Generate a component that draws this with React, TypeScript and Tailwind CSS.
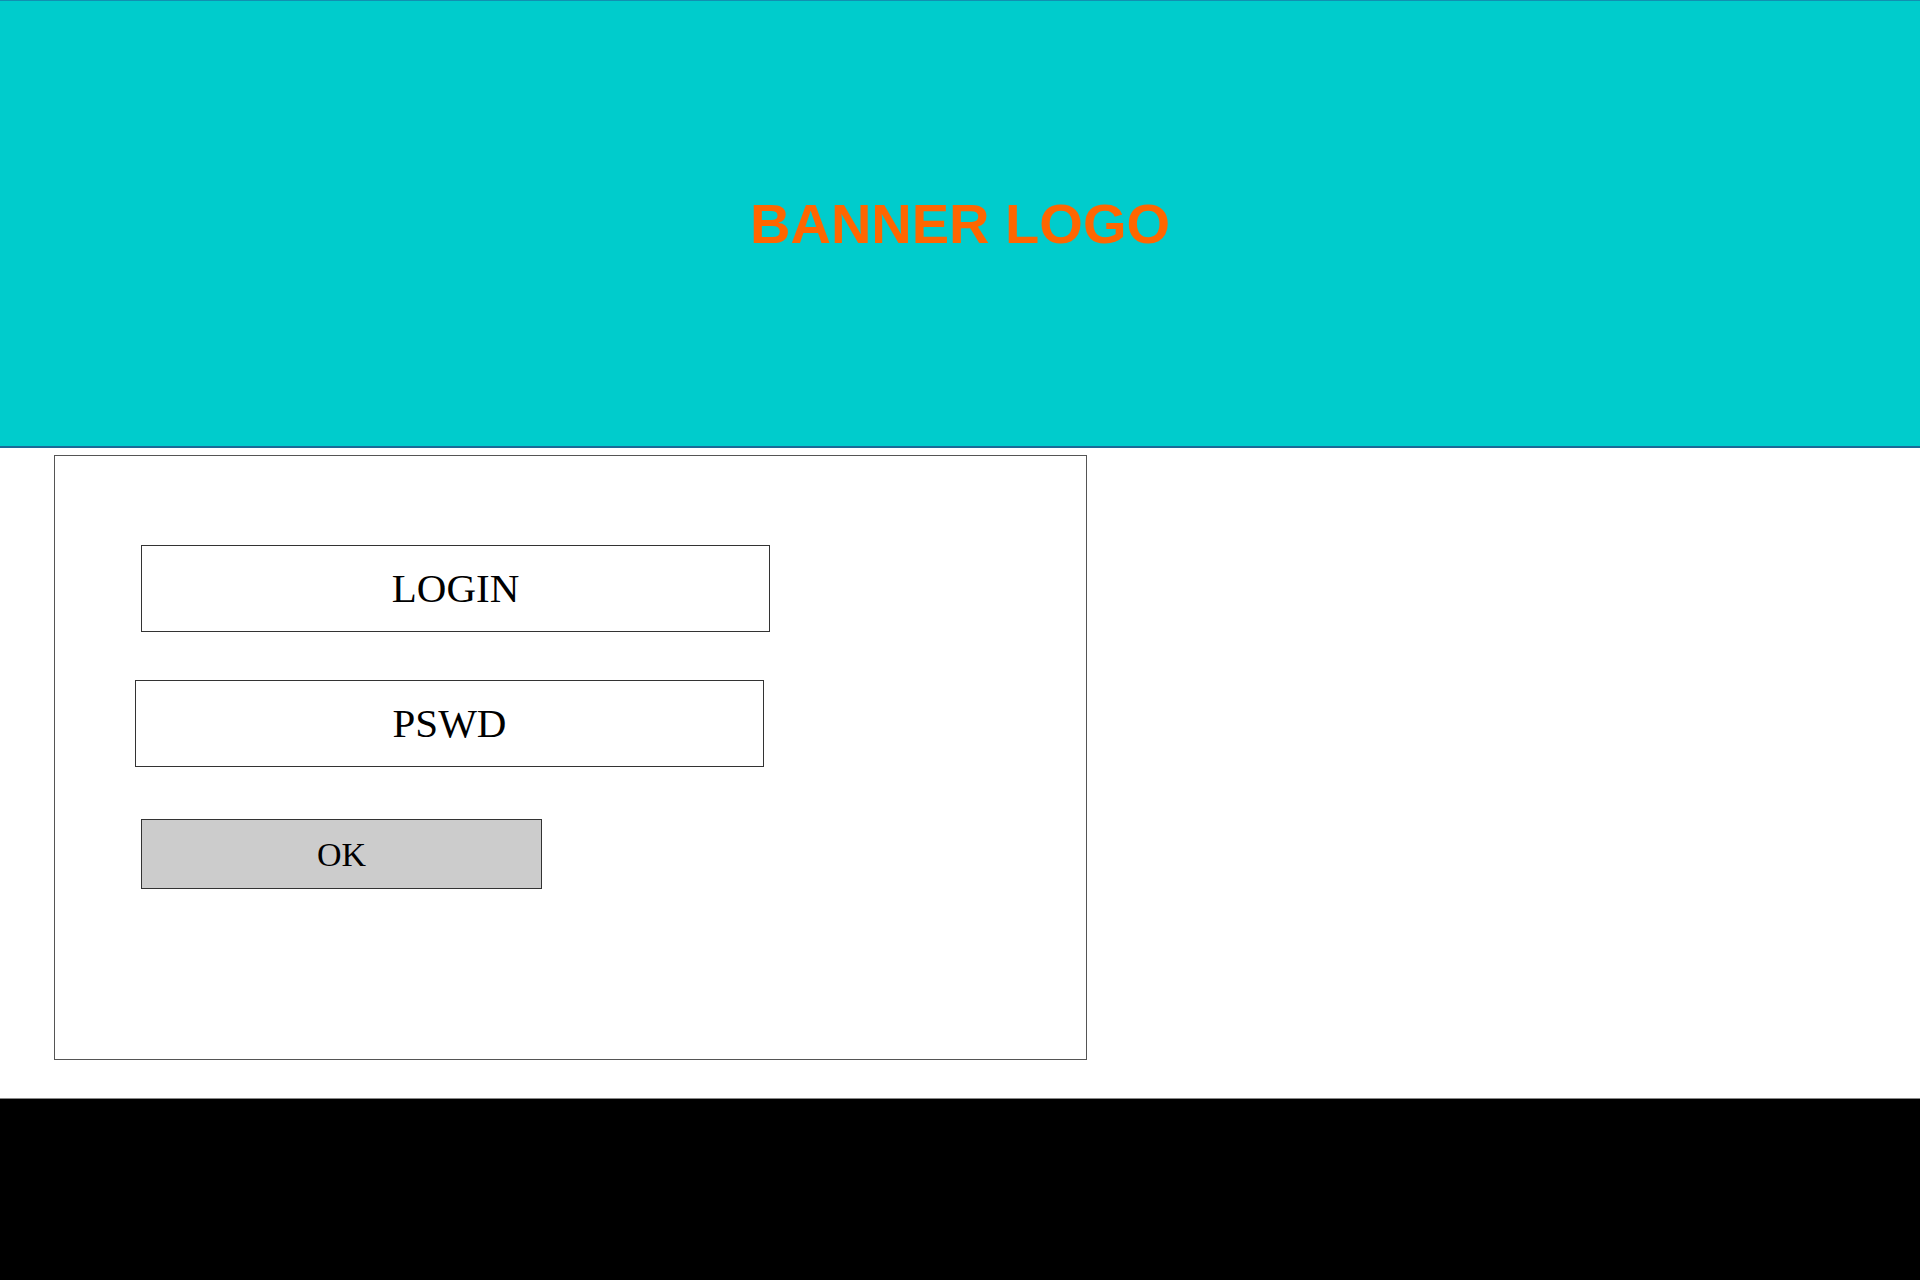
export default function App() {
    return (
        <div className="w-[1920px] h-[1280px] flex flex-col bg-white overflow-hidden">
            {/* Banner */}
            <header className="h-[448px] shrink-0 bg-[#00cccc] border-t border-t-[#1190b0] border-b-2 border-b-[#1a6a98] flex items-center justify-center">
                <span className="text-[#ff6600] font-bold text-[56px] leading-none font-['Liberation_Sans',Arial,sans-serif]">
                    BANNER LOGO
                </span>
            </header>

            {/* Login panel */}
            <main className="h-[650px] shrink-0 pt-[7px] pl-[54px]">
                <div className="w-[1033px] h-[605px] border border-[#555] flex flex-col pt-[89px] font-['Liberation_Serif','Times_New_Roman',serif] text-black">
                    <div className="ml-[86px] w-[629px] h-[87px] border border-[#333] flex items-center justify-center text-[41px]">
                        LOGIN
                    </div>
                    <div className="ml-[80px] mt-[48px] w-[629px] h-[87px] border border-[#333] flex items-center justify-center text-[41px]">
                        PSWD
                    </div>
                    <button className="ml-[86px] mt-[52px] w-[401px] h-[70px] border border-[#333] bg-[#cccccc] flex items-center justify-center text-[34px]">
                        OK
                    </button>
                </div>
            </main>

            {/* Footer */}
            <footer className="flex-1 bg-black border-t border-t-[#888]" />
        </div>
    );
}
